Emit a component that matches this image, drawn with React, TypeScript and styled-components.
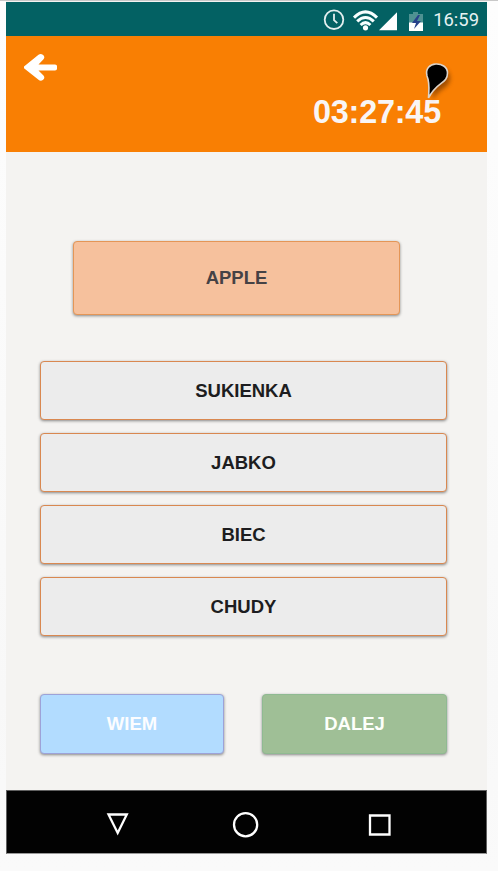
import React from "react";
import styled, { createGlobalStyle } from "styled-components";

const GlobalStyle = createGlobalStyle`
  * { box-sizing: border-box; }
  body { margin: 0; background: #fbfbfb; font-family: "Liberation Sans", Arial, sans-serif; }
  button { font-family: inherit; }
`;

const Page = styled.div`
  height: 871px;
  padding: 0 11px 0 6px;
  background: linear-gradient(#fdfdfd, #f8f8f8 80%, #fafafa);
  border-top: 1px solid #c8c8c8;
  overflow: hidden;
`;

const Phone = styled.main`
  display: flex;
  flex-direction: column;
  height: 853px;
  padding-top: 1px;
  background: #f4f3f1;
`;

const StatusBar = styled.div`
  display: flex;
  flex: 0 0 34px;
  height: 34px;
  background: #036163;
  color: #e6f2f2;
  justify-content: flex-end;
  align-items: center;
  padding-right: 8px;
`;

const StatusIcons = styled.svg`
  width: 104px;
  height: 34px;
  display: block;
  margin-right: 7px;
`;

const StatusTime = styled.time`
  font: 18.4px/32px Roboto, sans-serif;
  padding-top: 2px;
`;

const Header = styled.header`
  position: relative;
  display: flex;
  flex: 0 0 116px;
  flex-direction: column;
  background: #f97f03;
`;

const BackButton = styled.button`
  width: 35px;
  height: 29px;
  margin: 17px 0 0 17px;
  padding: 0;
  border: 0;
  background: none;
  svg { display: block; }
`;

const Timer = styled.time`
  align-self: flex-end;
  margin: 12px 46px 0 0;
  font-size: 32.4px;
  font-weight: bold;
  line-height: 37px;
  letter-spacing: -0.2px;
  color: #f9f5f5;
`;

const Pin = styled.svg`
  position: absolute;
  top: 22px;
  right: 26px;
  width: 42px;
  height: 46px;
`;

const Quiz = styled.section`
  display: flex;
  flex: 1;
  flex-direction: column;
  padding: 89px 40px 0 34px;
`;

const Tile = styled.button<{ $fill: string; $edge: string; $ink: string }>`
  display: flex;
  align-items: center;
  justify-content: center;
  height: 59px;
  padding: 0;
  border: 1px solid ${p => p.$edge};
  border-radius: 4px;
  background: ${p => p.$fill};
  color: ${p => p.$ink};
  box-shadow: 0 1px 3px rgba(0, 0, 0, 0.45);
  font-size: 18.5px;
  font-weight: bold;
  line-height: 22px;
`;

const WordTile = styled(Tile)`
  height: 74px;
  margin: 0 47px 46px 33px;
`;

const Options = styled.div`
  display: grid;
  gap: 13px;
  margin-bottom: 58px;
`;

const Actions = styled.div`
  display: grid;
  grid-template-columns: 184px 185px;
  justify-content: space-between;
`;

const ActionTile = styled(Tile)`
  height: 60px;
`;

const NavBar = styled.nav`
  flex: 0 0 64px;
  background: #020202;
  border: 1px solid #606060;
  border-bottom-color: #999;
  display: flex;
  svg { display: block; margin-left: 99px; }
`;

const options = ["SUKIENKA", "JABKO", "BIEC", "CHUDY"];

export default function App() {
  return (
    <>
      <GlobalStyle />
      <Page>
        <Phone>
          <StatusBar>
            <StatusIcons viewBox="322 2 104 34">
              <g fill="none" stroke="#e3efef" strokeWidth="1.8">
                <circle cx="334" cy="19.7" r="9.3" />
                <path d="M334 13.7v6.5l3.3 3" />
              </g>
              <g fill="none" stroke="#f7ffff" strokeWidth="3">
                <path d="M354 17.6q11.5-11.5 23 0M357.2 21.4q8.3-7.8 16.6 0M360.6 25q4.9-4.6 9.8 0" />
              </g>
              <circle cx="365.5" cy="27.8" r="2.6" fill="#fff" />
              <path d="M397 12.3v18h-18z" fill="#fff" />
              <path d="M413 12h5v2h5v10h-14V14h4z" fill="#4e9292" />
              <path d="M409 22.5h14v8.5h-14z" fill="#fff" />
              <path d="M418 15l-6 8h4l-2 6 7-8h-4l3-6z" fill="#26418a" />
            </StatusIcons>
            <StatusTime>16:59</StatusTime>
          </StatusBar>
          <Header>
            <BackButton aria-label="Wstecz">
              <svg width="35" height="29" viewBox="0 0 35 29">
                <path d="M1 13.5 L15.5 1.7 Q17.7.2 19.8 1.7 Q22.5 3.8 20.5 6.2 L15.5 11.5H32Q34 11.5 34 13V15.8Q34 17.5 32 17.5H15.5L20.5 22.5Q22.5 25 19.8 27Q17.7 28.6 15.5 26.8L1 15.3Z" fill="#fff" />
              </svg>
            </BackButton>
            <Timer>03:27:45</Timer>
            <Pin viewBox="0 0 42 46">
              <defs>
                <filter id="pinShadow" x="-50%" y="-50%" width="200%" height="200%">
                  <feGaussianBlur stdDeviation="2.2" />
                </filter>
              </defs>
              <path d="M9 39C10 30 10 25 8 17C7 3 27 3 27 16C27 27 16 25 9 39Z" transform="translate(4 4)" fill="#733500" opacity=".65" filter="url(#pinShadow)" />
              <path d="M9.5 40C10 30 11 25 8 18C4 2.5 28.5 2.5 28.5 15C28.5 26 18 23 9.5 40Z" fill="#000" stroke="#ddd4ca" strokeWidth="1.6" />
            </Pin>
          </Header>
          <Quiz>
            <WordTile $fill="#f6c19d" $edge="#e49657" $ink="#454245">APPLE</WordTile>
            <Options>
              {options.map(word => (
                <Tile key={word} $fill="#ececec" $edge="#d98850" $ink="#1d1d20">{word}</Tile>
              ))}
            </Options>
            <Actions>
              <ActionTile $fill="#b2dcff" $edge="#9da2d8" $ink="#fcfdff">WIEM</ActionTile>
              <ActionTile $fill="#9fbf96" $edge="#8fba92" $ink="#fdfffb">DALEJ</ActionTile>
            </Actions>
          </Quiz>
          <NavBar>
            <svg width="290" height="62" viewBox="106 791 290 62" fill="none" stroke="#fff" strokeWidth="2.3">
              <path d="M108.5 814.5H126.8L117.7 833Z" />
              <circle cx="245.6" cy="824.7" r="11.6" />
              <path d="M370 815.5h19.5v19H370z" />
            </svg>
          </NavBar>
        </Phone>
      </Page>
    </>
  );
}
